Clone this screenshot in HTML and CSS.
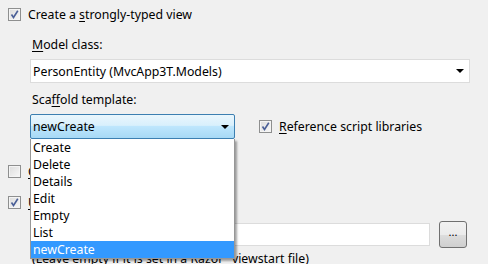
FILE: index.html
```html
<!DOCTYPE html>
<html lang="en">
<head>
    <meta charset="UTF-8">
    <title>Add View</title>
    <link rel="stylesheet" href="styles.css">
</head>
<body>
    <div class="dialog">
        <div class="check-row first">
            <span class="chk checked"></span>
            <span>Create a <u>s</u>trongly-typed view</span>
        </div>

        <div class="indent">
            <div class="label model-label"><u>M</u>odel class:</div>
            <div class="select model-select">
                <span>PersonEntity (MvcApp3T.Models)</span>
                <span class="arrow"></span>
            </div>

            <div class="label scaffold-label">Sca<u>f</u>fold template:</div>
            <div class="scaffold-row">
                <div class="combo-wrap">
                    <div class="combo">
                        <span>newCreate</span>
                        <span class="arrow"></span>
                    </div>
                    <ul class="dropdown">
                        <li>Create</li>
                        <li>Delete</li>
                        <li>Details</li>
                        <li>Edit</li>
                        <li>Empty</li>
                        <li>List</li>
                        <li class="active">newCreate</li>
                    </ul>
                </div>
                <div class="check-row ref">
                    <span class="chk checked"></span>
                    <span><u>R</u>eference script libraries</span>
                </div>
            </div>
        </div>

        <div class="check-row partial">
            <span class="chk"></span>
            <span><u>C</u>reate as a partial view</span>
        </div>
        <div class="check-row layout">
            <span class="chk checked"></span>
            <span><u>U</u>se a layout or master page:</span>
        </div>

        <div class="indent">
            <div class="path-row">
                <div class="textbox"></div>
                <div class="browse">...</div>
            </div>
            <div class="hint">(Leave empty if it is set in a Razor _viewstart file)</div>
        </div>
    </div>
</body>
</html>
```

FILE: styles.css
```css
body {
    margin: 0;
    background: #f0f0f0;
    font-family: "Noto Sans", "Open Sans", sans-serif;
    font-size: 12.3px;
    color: #000;
}
.dialog {
    width: 488px;
    height: 264px;
    overflow: hidden;
    position: relative;
}
u {
    text-decoration-thickness: 1px;
    text-underline-offset: 2px;
}
.check-row {
    display: flex;
    align-items: center;
    gap: 7px;
    height: 13px;
    white-space: nowrap;
}
.check-row.first {
    margin: 8px 0 0 8px;
}
.chk {
    flex: none;
    width: 11px;
    height: 11px;
    border: 1px solid #8e8f8f;
    background: linear-gradient(135deg, #dcdcdc, #f8f8f8);
    box-shadow: inset 0 0 0 1px #f4f4f4;
}
.chk.checked {
    background-image: url("data:image/svg+xml,%3Csvg xmlns='http://www.w3.org/2000/svg' width='11' height='11'%3E%3Cpath d='M2.5 5.5 L4.5 8.5 L8.8 1.8' fill='none' stroke='%234a5f97' stroke-width='1.6'/%3E%3C/svg%3E"), linear-gradient(135deg, #dcdcdc, #f8f8f8);
}
.indent {
    padding-left: 30px;
}
.label {
    height: 14px;
    line-height: 14px;
    padding-left: 2px;
}
.model-label {
    margin-top: 17px;
}
.select {
    width: 436px;
    height: 22px;
    margin-top: 7px;
    border: 1px solid #dcdcdc;
    background: #fff;
    display: flex;
    align-items: center;
    justify-content: space-between;
    padding-left: 2px;
}
.arrow {
    width: 0;
    height: 0;
    border-left: 4px solid transparent;
    border-right: 4px solid transparent;
    border-top: 4px solid #000;
    margin-right: 5px;
}
.scaffold-label {
    margin-top: 10px;
}
.scaffold-row {
    display: flex;
    align-items: flex-start;
    margin-top: 7px;
    height: 25px;
}
.combo-wrap {
    position: relative;
    width: 205px;
}
.combo {
    height: 23px;
    border: 1px solid #3c7fb1;
    border-radius: 2px;
    background: linear-gradient(#eaf6fd, #d9f0fc 45%, #bee6fd 50%, #a7d9f5);
    display: flex;
    align-items: center;
    justify-content: space-between;
    padding-left: 2px;
}
.dropdown {
    position: absolute;
    top: 25px;
    left: 0;
    width: 203px;
    margin: 0;
    padding: 0;
    list-style: none;
    background: #fff;
    border: 1px solid #979797;
    border-top: none;
    box-shadow: 2px 2px 2px rgba(0,0,0,0.35);
    z-index: 2;
}
.dropdown li {
    height: 17px;
    line-height: 17px;
    padding-left: 2px;
}
.dropdown li.active {
    background: #3399ff;
    color: #fff;
}
.ref {
    margin: 6px 0 0 24px;
}
.partial {
    margin: 26px 0 0 8px;
}
.layout {
    margin: 18px 0 0 8px;
}
.path-row {
    display: flex;
    align-items: center;
    margin-top: 12px;
    gap: 9px;
}
.textbox {
    width: 398px;
    height: 21px;
    border: 1px solid #dcdcdc;
    background: #fff;
}
.browse {
    width: 26px;
    height: 25px;
    border: 1px solid #707070;
    border-radius: 3px;
    background: linear-gradient(#f2f2f2, #ebebeb 50%, #dddddd 51%, #cfcfcf);
    text-align: center;
    line-height: 20px;
    font-size: 11px;
}
.hint {
    margin-top: 2px;
    padding-left: 2px;
}
```
